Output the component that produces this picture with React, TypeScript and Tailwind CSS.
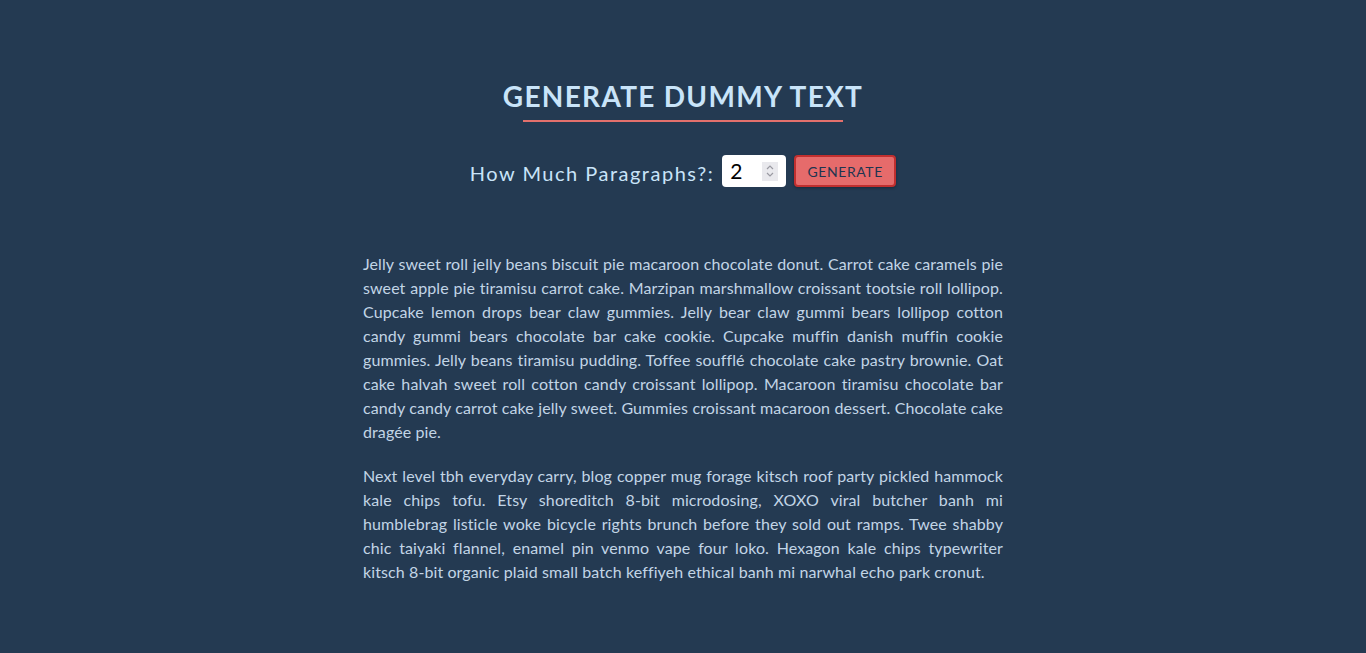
import React, { useState } from "react";

const paragraphs = [
  "Jelly sweet roll jelly beans biscuit pie macaroon chocolate donut. Carrot cake caramels pie sweet apple pie tiramisu carrot cake. Marzipan marshmallow croissant tootsie roll lollipop. Cupcake lemon drops bear claw gummies. Jelly bear claw gummi bears lollipop cotton candy gummi bears chocolate bar cake cookie. Cupcake muffin danish muffin cookie gummies. Jelly beans tiramisu pudding. Toffee soufflé chocolate cake pastry brownie. Oat cake halvah sweet roll cotton candy croissant lollipop. Macaroon tiramisu chocolate bar candy candy carrot cake jelly sweet. Gummies croissant macaroon dessert. Chocolate cake dragée pie.",
  "Next level tbh everyday carry, blog copper mug forage kitsch roof party pickled hammock kale chips tofu. Etsy shoreditch 8-bit microdosing, XOXO viral butcher banh mi humblebrag listicle woke bicycle rights brunch before they sold out ramps. Twee shabby chic taiyaki flannel, enamel pin venmo vape four loko. Hexagon kale chips typewriter kitsch 8-bit organic plaid small batch keffiyeh ethical banh mi narwhal echo park cronut.",
];

const App = () => {
  const [count, setCount] = useState(2);

  return (
    <div className="min-h-screen bg-[#243a52] font-['Lato',sans-serif]">
      <section className="pt-[78px] flex flex-col items-center">
        <h3 className="text-[28px] leading-[36px] font-bold tracking-[1.3px] text-[#c9e4f9] uppercase">
          Generate Dummy Text
        </h3>
        <div className="mt-[6px] w-[320px] h-[2px] bg-[#e3706c]"></div>
        <form
          className="mt-[32px] flex items-center"
          onSubmit={(e) => e.preventDefault()}
        >
          <label className="mt-[4px] text-[20px] tracking-[1.5px] text-[#c9e4f9] mr-[8px]">
            How Much Paragraphs?:
          </label>
          <div className="w-[64px] h-[32px] bg-white rounded-[4px] flex items-center pl-[8px] pr-[8px]">
            <input
              type="number"
              value={count}
              onChange={(e) => setCount(Number(e.target.value))}
              className="w-[30px] text-[21px] text-black outline-none bg-transparent [appearance:textfield] [&::-webkit-inner-spin-button]:appearance-none"
            />
            <div className="ml-auto w-[16px] h-[19px] bg-[#e9e9ed] flex flex-col items-center justify-center">
              <svg width="8" height="14" viewBox="0 0 8 14" fill="none" stroke="#9a9aa2" strokeWidth="1.2">
                <path d="M1 5 L4 2 L7 5" />
                <path d="M1 9 L4 12 L7 9" />
              </svg>
            </div>
          </div>
          <button
            type="submit"
            className="ml-[8px] w-[102px] h-[32px] bg-[#e66b6b] border-2 border-[#c12f2f] rounded-[4px] text-[14px] tracking-[0.6px] text-[#1f3550] shadow-[0_1px_3px_rgba(0,0,0,0.3)]"
          >
            GENERATE
          </button>
        </form>
      </section>
      <article className="w-[640px] mx-auto mt-[64px] text-[16px] tracking-[0.1px] leading-[24px] text-[#c2d5e6] text-justify">
        {paragraphs.map((p, i) => (
          <p key={i} className="mb-[20px]">
            {p}
          </p>
        ))}
      </article>
    </div>
  );
};

export default App;
